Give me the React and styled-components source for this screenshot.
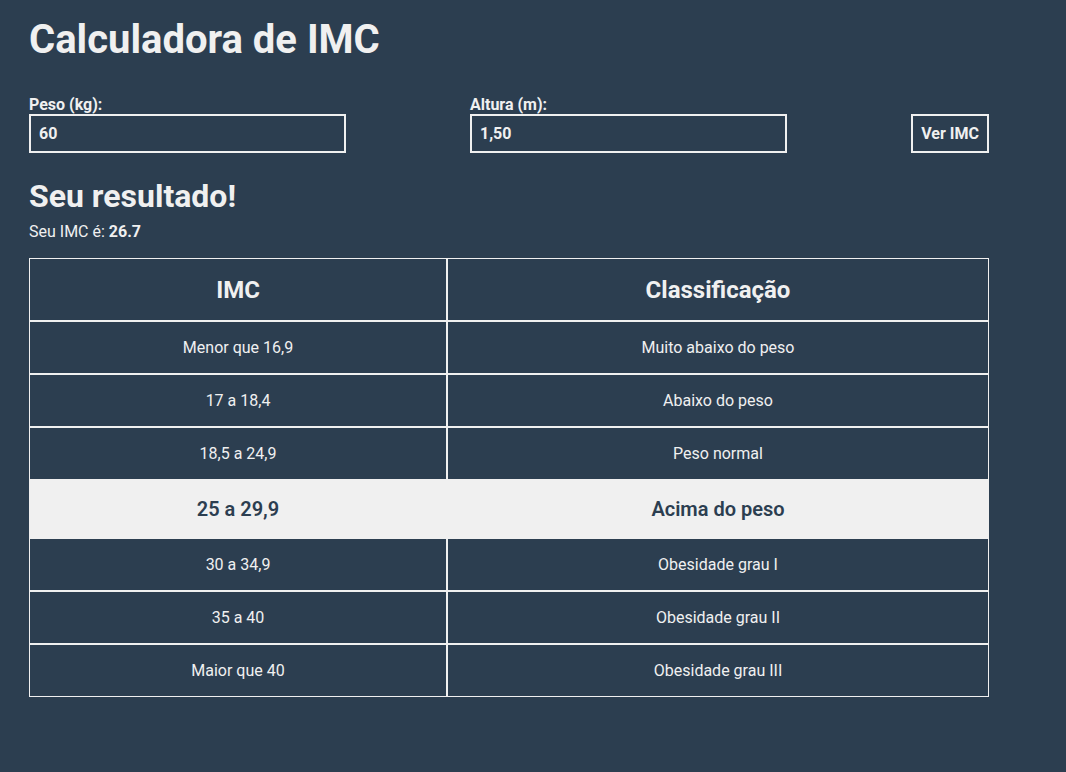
import React from "react";
import styled, { createGlobalStyle } from "styled-components";

const GlobalStyle = createGlobalStyle`
  html, body {
    margin: 0;
    padding: 0;
    background: #2c3e50;
  }
  body {
    font-family: Roboto, "Liberation Sans", Arial, sans-serif;
    color: #f0f0f0;
  }
`;

const Page = styled.main`
  min-height: 772px;
  box-sizing: border-box;
  padding: 16px 29px 40px;
  width: 1018px;
`;

const Title = styled.h1`
  margin: 0;
  font-size: 40px;
  font-weight: 700;
  line-height: normal;
`;

const Form = styled.form`
  margin-top: 32px;
  width: 960px;
  display: flex;
  justify-content: space-between;
  align-items: flex-end;
`;

const Field = styled.div`
  display: flex;
  flex-direction: column;
`;

const Label = styled.label`
  font-size: 16px;
  font-weight: 700;
  line-height: normal;
`;

const Input = styled.input`
  box-sizing: border-box;
  width: 317px;
  height: 39px;
  border: 2px solid #f0f0f0;
  background: transparent;
  color: #f0f0f0;
  font-family: inherit;
  font-size: 16px;
  font-weight: 700;
  padding: 0 8px;
  outline: none;
`;

const Button = styled.button`
  box-sizing: border-box;
  width: 78px;
  height: 39px;
  border: 2px solid #f0f0f0;
  background: transparent;
  color: #f0f0f0;
  font-family: inherit;
  font-size: 16px;
  font-weight: 700;
  padding: 0;
  cursor: pointer;
`;

const Subtitle = styled.h2`
  margin: 24px 0 0;
  font-size: 32px;
  font-weight: 700;
  line-height: normal;
`;

const Result = styled.p`
  margin: 7px 0 0;
  font-size: 16px;
  line-height: normal;
`;

const Table = styled.table`
  margin-top: 17px;
  width: 960px;
  border-collapse: separate;
  border-spacing: 0;
`;

const Th = styled.th`
  border: 1px solid #f0f0f0;
  padding: 16.5px 16px;
  font-size: 24px;
  font-weight: 700;
  line-height: normal;
  text-align: center;
  width: ${(p) => p.$w || "auto"};
`;

const Td = styled.td`
  border: 1px solid #f0f0f0;
  padding: 16px;
  font-size: ${(p) => (p.$active ? "20px" : "16px")};
  font-weight: ${(p) => (p.$active ? 600 : 400)};
  line-height: normal;
  text-align: center;
  background: ${(p) => (p.$active ? "#f0f0f0" : "transparent")};
  color: ${(p) => (p.$active ? "#2c3e50" : "#f0f0f0")};
`;

const rows = [
  ["Menor que 16,9", "Muito abaixo do peso"],
  ["17 a 18,4", "Abaixo do peso"],
  ["18,5 a 24,9", "Peso normal"],
  ["25 a 29,9", "Acima do peso", true],
  ["30 a 34,9", "Obesidade grau I"],
  ["35 a 40", "Obesidade grau II"],
  ["Maior que 40", "Obesidade grau III"],
];

export default function App() {
  return (
    <>
      <GlobalStyle />
      <Page>
        <Title>Calculadora de IMC</Title>
        <Form onSubmit={(e) => e.preventDefault()}>
          <Field>
            <Label htmlFor="peso">Peso (kg):</Label>
            <Input id="peso" defaultValue="60" />
          </Field>
          <Field>
            <Label htmlFor="altura">Altura (m):</Label>
            <Input id="altura" defaultValue="1,50" />
          </Field>
          <Button type="submit">Ver IMC</Button>
        </Form>
        <Subtitle>Seu resultado!</Subtitle>
        <Result>
          Seu IMC é: <strong>26.7</strong>
        </Result>
        <Table>
          <thead>
            <tr>
              <Th $w="384px">IMC</Th>
              <Th>Classificação</Th>
            </tr>
          </thead>
          <tbody>
            {rows.map(([imc, cls, active]) => (
              <tr key={imc}>
                <Td $active={active}>{imc}</Td>
                <Td $active={active}>{cls}</Td>
              </tr>
            ))}
          </tbody>
        </Table>
      </Page>
    </>
  );
}
